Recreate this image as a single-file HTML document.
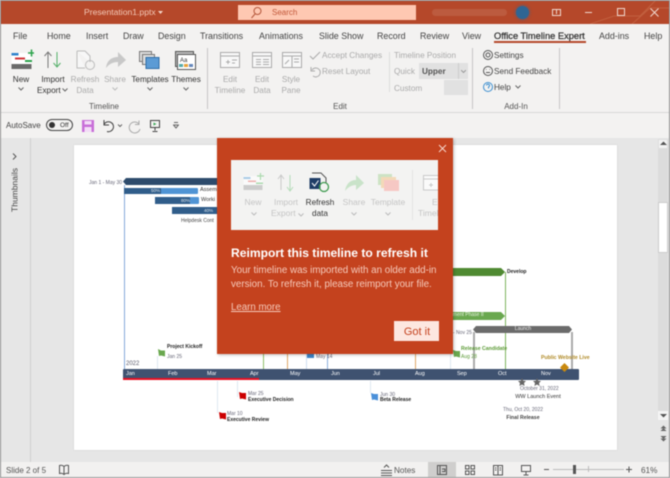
<!DOCTYPE html>
<html><head><meta charset="utf-8"><style>
html,body{margin:0;padding:0}
body{width:670px;height:478px;overflow:hidden;background:#e6e6e6;font-family:"Liberation Sans",sans-serif;position:relative}
#w{position:absolute;left:0;top:0;width:670px;height:478px;overflow:hidden;filter:blur(.4px)}
#w div,#w span.t,#w svg{position:absolute}
.t{position:absolute;white-space:nowrap;font-size:8.2px;line-height:11px;color:#444;margin-top:1px}
.c{transform:translateX(-50%);text-align:center}
.tab{top:29px;font-size:8.9px;line-height:12px;color:#444}
.g{color:#aaa}
.k{color:#333}
.m{font-size:5px;line-height:7px;color:#222}
.d{font-size:5px;line-height:6px;color:#667}
.b{font-weight:bold}
.mo{font-size:5.5px;line-height:7px;color:#fff;top:370px}
.q{color:#c4c4c4;font-size:8.500px}
</style></head><body><div id="w">
<!-- chrome -->
<div style="left:0;top:0;width:670px;height:24px;background:#b5482a"></div>
<div style="left:0;top:24px;width:670px;height:89px;background:#f3f2f1"></div>
<div style="left:0;top:112px;width:670px;height:1px;background:#d8d8d8"></div>
<div style="left:0;top:113px;width:670px;height:25px;background:#f3f2f1"></div>
<span class="t" style="left:84px;top:6px;font-size:8.600px;color:#f3c9b8">Presentation1.pptx</span>
<svg style="left:158px;top:11px" width="6" height="4"><path d="M0 0h5L2.500 3z" fill="#f3d5c8"/></svg>
<div style="left:238px;top:5px;width:178px;height:15px;background:#fec8b2"></div>
<svg style="left:250px;top:6px" width="13" height="13" fill="none" stroke="#b5563a"><circle cx="7.500" cy="5" r="3.500"/><path d="M5 8L1.500 12"/></svg>
<span class="t" style="left:272px;top:6px;font-size:8px;color:#c2583a">Search</span>
<div style="left:432px;top:9px;width:75px;height:7px;background:#c9775e;opacity:.4;border-radius:4px"></div>
<div style="left:516px;top:6px;width:13px;height:13px;border-radius:50%;background:#2f6593;box-shadow:0 0 3px #33658f"></div>
<svg style="left:590px;top:0" width="80" height="24" fill="none" stroke="#c2603f"><path d="M0 24L24 16H50L66 0M42 24L60 8H80"/></svg>
<svg style="left:550px;top:7px" width="120" height="12" fill="none" stroke="#f0d8cf"><rect x="2.500" y="2.500" width="8" height="6"/><path d="M6.500 3v4"/><path d="M35 5.500h7"/><rect x="67.500" y="1.500" width="7" height="7"/><path d="M100.500 1.500l8 8M108.500 1.500l-8 8"/></svg>
<span class="t tab" style="left:13px">File</span>
<span class="t tab" style="left:47px">Home</span>
<span class="t tab" style="left:86px">Insert</span>
<span class="t tab" style="left:123px">Draw</span>
<span class="t tab" style="left:158px">Design</span>
<span class="t tab" style="left:200px">Transitions</span>
<span class="t tab" style="left:259px">Animations</span>
<span class="t tab" style="left:319px">Slide Show</span>
<span class="t tab" style="left:377px">Record</span>
<span class="t tab" style="left:420px">Review</span>
<span class="t tab" style="left:462px">View</span>
<span class="t tab" style="left:494px;font-size:9.300px;color:#333;-webkit-text-stroke:.25px #333">Office Timeline Expert</span>
<div style="left:494px;top:41px;width:92px;height:2px;background:#b5482a"></div>
<span class="t tab" style="left:599px">Add-ins</span>
<span class="t tab" style="left:644px">Help</span>
<!-- ribbon: new -->
<svg style="left:10px;top:49px" width="24" height="21"><rect x="1.500" y="4" width="20" height="16" fill="#fff"/><rect x="1.500" y="15" width="20" height="5" fill="#6b6b6b"/><rect x="1.500" y="4" width="7" height="2.500" fill="#2f83cc"/><rect x="5" y="8.500" width="10" height="2" fill="#d13438"/><rect x="15" y="11" width="7" height="2" fill="#2aa24a"/><path d="M25 4h-7M21.500 .5v7" stroke="#2aa24a" stroke-width="1.500"/></svg>
<span class="t c k" style="left:21px;top:73px">New</span>
<svg style="left:18px;top:87px" width="6" height="4" fill="none" stroke="#666"><path d="M.5 .5L3 3L5.500 .5"/></svg>
<svg style="left:43px;top:50px" width="20" height="19" fill="none"><path d="M5 18V2M1.500 6L5 2l3.500 4" stroke="#777"/><path d="M14 2v15M10.500 13l3.500 4 3.500-4" stroke="#55b06a"/></svg>
<span class="t c k" style="left:53px;top:73px">Import</span>
<span class="t k" style="left:37px;top:84px">Export</span>
<svg style="left:62px;top:88px" width="6" height="4" fill="none" stroke="#666"><path d="M.5 .5L3 3L5.500 .5"/></svg>
<svg style="left:75px;top:50px" width="23" height="21" fill="none" stroke="#bbb"><path d="M2 1h8l5 5v6M2 1v17h8" fill="#f7f7f7"/><circle cx="15" cy="15" r="4.500"/></svg>
<span class="t c g" style="left:85px;top:73px">Refresh</span>
<span class="t c g" style="left:85px;top:84px">Data</span>
<svg style="left:105px;top:51px" width="22" height="18"><path d="M1 17C2 9 7 6 13 6V1l8 8-8 7v-5C8 11 4 13 1 17z" fill="#c8c8c8"/></svg>
<span class="t c g" style="left:115px;top:73px">Share</span>
<svg style="left:112px;top:87px" width="6" height="4" fill="none" stroke="#bbb"><path d="M.5 .5L3 3L5.500 .5"/></svg>
<svg style="left:139px;top:51px" width="22" height="18"><rect x=".5" y=".5" width="12" height="10" fill="#ddd" stroke="#777"/><rect x="3.500" y="3.500" width="12" height="10" fill="#ddd" stroke="#777"/><rect x="7" y="6.500" width="13" height="11" fill="#5b9bd5" stroke="#2f6ea8"/></svg>
<span class="t c k" style="left:150px;top:73px">Templates</span>
<svg style="left:147px;top:87px" width="6" height="4" fill="none" stroke="#666"><path d="M.5 .5L3 3L5.500 .5"/></svg>
<svg style="left:175px;top:51px" width="22" height="19"><rect x=".5" y=".5" width="18" height="15" fill="#bbb" stroke="#555"/><rect x="2.500" y="3.500" width="18" height="15" fill="#fff" stroke="#555"/><text x="5" y="11" font-size="6" font-family="Liberation Sans" fill="#333">Aa</text><rect x="4" y="13" width="4" height="3" fill="#5aa"/><rect x="9" y="13" width="4" height="3" fill="#e8a33a"/><rect x="14" y="13" width="4" height="3" fill="#68b"/></svg>
<span class="t c k" style="left:186px;top:73px">Themes</span>
<svg style="left:183px;top:87px" width="6" height="4" fill="none" stroke="#666"><path d="M.5 .5L3 3L5.500 .5"/></svg>
<span class="t c" style="left:104px;top:100px;font-size:8px;color:#555">Timeline</span>
<div style="left:207px;top:48px;width:1px;height:61px;background:#c6c6c6"></div>
<!-- edit -->
<svg style="left:220px;top:52px" width="86" height="17" fill="#f8f8f8" stroke="#aaa"><rect x=".5" y=".5" width="19" height="15"/><path d="M1 4h18M6 10h4M8 8v4M12 8h5M12 11h3"/><rect x="32.500" y=".5" width="19" height="15"/><path d="M33 4h18M36 7.500h5M43 7.500h6M36 10h5M43 10h6M36 12.500h5M43 12.500h6"/><rect x="62.500" y=".5" width="19" height="15"/><path d="M63 4h18M72 4v11M65 12l4-4M74 7h5M74 10h5"/></svg>
<span class="t c g" style="left:230px;top:73px">Edit</span><span class="t c g" style="left:230px;top:84px">Timeline</span>
<span class="t c g" style="left:262px;top:73px">Edit</span><span class="t c g" style="left:262px;top:84px">Data</span>
<span class="t c g" style="left:291px;top:73px">Style</span><span class="t c g" style="left:291px;top:84px">Pane</span>
<svg style="left:309px;top:50px" width="13" height="30" fill="none" stroke="#aaa"><path d="M1 6l3 3 7-7"/><path d="M3 20a4.500 4.500 0 1 1 1 6M2 17v4h4"/></svg>
<span class="t g" style="left:322px;top:49px">Accept Changes</span>
<span class="t g" style="left:322px;top:65px">Reset Layout</span>
<div style="left:389px;top:52px;width:1px;height:40px;background:#ddd"></div>
<span class="t g" style="left:394px;top:49px">Timeline Position</span>
<span class="t g" style="left:394px;top:65px">Quick</span>
<span class="t g" style="left:394px;top:82px">Custom</span>
<div style="left:419px;top:63px;width:49px;height:16px;background:#e1e1e1"></div>
<div style="left:458px;top:63px;width:1px;height:16px;background:#ccc"></div>
<span class="t b" style="left:422px;top:65px;color:#555">Upper</span>
<svg style="left:461px;top:70px" width="5" height="3" fill="none" stroke="#999"><path d="M0 0L2.500 2.500L5 0"/></svg>
<div style="left:444px;top:80px;width:24px;height:15px;background:#e1e1e1"></div>
<span class="t c" style="left:340px;top:100px;font-size:8px;color:#555">Edit</span>
<div style="left:472px;top:48px;width:1px;height:61px;background:#c6c6c6"></div>
<!-- add-in -->
<svg style="left:481px;top:49px" width="15" height="47" fill="none" stroke="#555"><circle cx="7" cy="6" r="4.500"/><circle cx="7" cy="6" r="2"/><circle cx="7" cy="22" r="4.500"/><path d="M5 23.500h4M5 20.500h.5M8.500 20.500h.5"/><circle cx="7" cy="38" r="4.500" stroke="#3b8ed0"/><path d="M5.500 36.500a1.500 1.500 0 1 1 2 1.500v1.500" stroke="#3b8ed0"/></svg>
<span class="t" style="left:494px;top:49px">Settings</span>
<span class="t" style="left:494px;top:65px">Send Feedback</span>
<span class="t" style="left:494px;top:81px">Help</span>
<svg style="left:515px;top:85px" width="6" height="4" fill="none" stroke="#666"><path d="M.5 .5L3 3L5.500 .5"/></svg>
<span class="t c" style="left:516px;top:100px;font-size:8px;color:#555">Add-In</span>
<div style="left:559px;top:48px;width:1px;height:61px;background:#c6c6c6"></div>
<!-- QAT -->
<span class="t" style="left:6px;top:119px;font-size:8px">AutoSave</span>
<div style="left:46px;top:119px;width:25px;height:10px;border:1px solid #444;border-radius:6px"></div>
<div style="left:49px;top:122px;width:6px;height:6px;border-radius:50%;background:#333"></div>
<span class="t" style="left:60px;top:119px;font-size:6.500px;color:#333">Off</span>
<svg style="left:82px;top:120px" width="12" height="12"><rect x="0" y="0" width="12" height="12" fill="#c86fd8"/><rect x="2.500" y="1" width="7" height="3.500" fill="#f3dcf7"/><rect x="2.500" y="7" width="7" height="5" fill="#f3dcf7"/></svg>
<svg style="left:101px;top:118px" width="22" height="15" fill="none" stroke="#444"><path d="M3 2v5h5M3 6.500a5 5 0 1 1 3 7"/><path d="M17 6.500l2 2 2-2" stroke="#666"/></svg>
<svg style="left:128px;top:119px" width="15" height="15" fill="none" stroke="#aaa"><path d="M11 1.500v4H7M11 5a5.500 5.500 0 1 0 1 5"/></svg>
<svg style="left:149px;top:120px" width="13" height="13" fill="none" stroke="#444"><rect x="1.500" y=".5" width="9" height="7"/><path d="M6 7.500v3M3.500 11.500h5"/><path d="M4.500 2.500l3 1.500-3 1.500z" fill="#3aa655" stroke="none"/></svg>
<svg style="left:173px;top:122px" width="6" height="7" fill="none" stroke="#666"><path d="M1 .5h4M.5 3L3 6l2.500-3z"/></svg>
<!-- main -->
<div style="left:30px;top:138px;width:1px;height:324px;background:#cfcfcf"></div>
<svg style="left:12px;top:153px" width="5" height="7" fill="none" stroke="#555"><path d="M1 .5L4 3.500L1 6.500"/></svg>
<span class="t" style="left:14.500px;top:189px;font-size:8.500px;transform:translate(-50%,-50%) rotate(-90deg);color:#444">Thumbnails</span>
<div style="left:74px;top:145px;width:543px;height:305px;background:#fff;box-shadow:0 0 1px #bbb"></div>
<!-- scrollbar -->
<div style="left:658px;top:139px;width:10px;height:281px;background:#dcdcdc"></div>
<div style="left:658px;top:139px;width:10px;height:10px;background:#f4f4f4;border:1px solid #ddd;box-sizing:border-box"></div>
<div style="left:658px;top:202px;width:10px;height:51px;background:#fff;border:1px solid #ccc;box-sizing:border-box"></div>
<div style="left:658px;top:411px;width:10px;height:9px;background:#f4f4f4"></div>
<svg style="left:660px;top:141px" width="7" height="5"><path d="M0 4L3.500 .5 7 4z" fill="#555"/></svg>
<svg style="left:660px;top:413px" width="7" height="5"><path d="M0 1L3.500 4.500 7 1z" fill="#555"/></svg>
<svg style="left:660px;top:424px" width="7" height="8" fill="#666"><path d="M1 .5h5M3.500 1.500L.5 4.500h6zM3.500 4L.5 7h6z"/></svg>
<svg style="left:660px;top:435px" width="7" height="8" fill="#666"><path d="M1 7.500h5M3.500 6.500L.5 3.500h6zM3.500 4L.5 1h6z"/></svg>
<!-- timeline -->
<span class="t d" style="left:89px;top:179px">Jan 1 - May 30</span>
<div style="left:124px;top:185px;width:1px;height:184px;background:#85a9da"></div>
<svg style="left:123px;top:177px" width="100" height="10"><path d="M0 4.500L3 1H100V8H3z" fill="#2d4b6c"/></svg>
<div style="left:124px;top:188px;width:74px;height:6px;background:#5094d4;border-radius:1px"></div>
<div style="left:124px;top:188px;width:37px;height:6px;background:#305d8a"></div>
<span class="t" style="left:151px;top:187px;font-size:4.500px;line-height:6px;color:#dfe8f0">50%</span>
<span class="t k" style="left:200px;top:186px;font-size:5.500px;line-height:7px">Assem</span>
<div style="left:155px;top:197px;width:44px;height:7px;background:#5094d4;border-radius:1px"></div>
<div style="left:155px;top:197px;width:35px;height:7px;background:#305d8a"></div>
<span class="t" style="left:181px;top:197px;font-size:4.500px;line-height:6px;color:#dfe8f0">80%</span>
<span class="t k" style="left:201px;top:196px;font-size:5.500px;line-height:7px">Worki</span>
<div style="left:172px;top:207px;width:45px;height:7px;background:#305d8a"></div>
<span class="t" style="left:204px;top:207px;font-size:4.500px;line-height:6px;color:#dfe8f0">40%</span>
<span class="t" style="left:181px;top:217px;font-size:5px;line-height:7px;color:#444">Helpdesk Cont</span>
<!-- axis -->
<div style="left:123px;top:369px;width:456px;height:11px;background:#3f5270;border-radius:1px"></div>
<div style="left:123px;top:378px;width:136px;height:2px;background:#e81123"></div>
<span class="t" style="left:126px;top:360px;font-size:6px;line-height:7px;color:#556">2022</span>
<span class="t mo" style="left:126px">Jan</span><span class="t mo" style="left:168px">Feb</span><span class="t mo" style="left:207px">Mar</span><span class="t mo" style="left:250px">Apr</span><span class="t mo" style="left:290px">May</span><span class="t mo" style="left:331px">Jun</span><span class="t mo" style="left:373px">Jul</span><span class="t mo" style="left:415px">Aug</span><span class="t mo" style="left:457px">Sep</span><span class="t mo" style="left:498px">Oct</span><span class="t mo" style="left:541px">Nov</span>
<!-- milestones above -->
<div style="left:157px;top:356px;width:1px;height:13px;background:#dfe8f2"></div>
<svg style="left:158px;top:349px" width="8" height="8"><path d="M0 0l3 1.500 4 0v6l-4-1-2 .5z" fill="#6aa84f"/></svg>
<span class="t m b" style="left:167px;top:343px">Project Kickoff</span>
<span class="t d" style="left:167px;top:353px">Jan 25</span>
<div style="left:263px;top:354px;width:1px;height:15px;background:#8fbf6a"></div>
<div style="left:287px;top:354px;width:1px;height:15px;background:#e0a868"></div>
<div style="left:306px;top:354px;width:1px;height:15px;background:#cfdff2"></div>
<div style="left:327px;top:354px;width:1px;height:15px;background:#8cb0dc"></div>
<svg style="left:307px;top:354px" width="8" height="4"><path d="M0 0h7v4H0z" fill="#3d84c6"/></svg>
<span class="t d" style="left:316px;top:353px">May 14</span>
<div style="left:415px;top:354px;width:1px;height:15px;background:#e0a868"></div>
<div style="left:450px;top:354px;width:1px;height:15px;background:#dfe8f2"></div>
<!-- below -->
<div style="left:217px;top:381px;width:1px;height:32px;background:#dfe8f2"></div>
<div style="left:237px;top:381px;width:1px;height:16px;background:#dfe8f2"></div>
<svg style="left:239px;top:392px" width="8" height="8"><path d="M0 0l3 1 4 0v6.500l-4-1-2 .5z" fill="#c00"/></svg>
<span class="t d" style="left:248px;top:390px">Mar 25</span>
<span class="t m b" style="left:248px;top:396px">Executive Decision</span>
<svg style="left:219px;top:412px" width="8" height="8"><path d="M0 0l3 1 4 0v6.500l-4-1-2 .5z" fill="#c00"/></svg>
<span class="t d" style="left:227px;top:410px">Mar 10</span>
<span class="t m b" style="left:227px;top:416px">Executive Review</span>
<div style="left:370px;top:381px;width:1px;height:12px;background:#dfe8f2"></div>
<svg style="left:371px;top:393px" width="8" height="8"><path d="M0 0l3 1 4 0v6.500l-4-1-2 .5z" fill="#4a90d9"/></svg>
<span class="t d" style="left:380px;top:391px">Jun 30</span>
<span class="t m b" style="left:380px;top:396px">Beta Release</span>
<!-- right bars -->
<svg style="left:450px;top:268px" width="56" height="8"><path d="M0 0H51L55 4L51 8H0z" fill="#4f8a32"/></svg>
<span class="t b" style="left:507px;top:268px;font-size:5px;line-height:7px;color:#222">Develop</span>
<svg style="left:450px;top:312px" width="56" height="8"><path d="M0 0H51L55 4L51 8H0z" fill="#6aa84f"/></svg>
<span class="t" style="left:450px;top:311px;font-size:5px;line-height:7px;color:#eaf3e4">pment Phase II</span>
<div style="left:505px;top:272px;width:1px;height:97px;background:#7fb35e"></div>
<span class="t d" style="left:453px;top:329px">- Nov 25</span>
<svg style="left:473px;top:325px" width="100" height="9"><path d="M0 4.500L3 1H96L99 4.500L96 8H3z" fill="#6b6b6b"/></svg>
<span class="t c" style="left:523px;top:325px;font-size:5px;line-height:7px;color:#eee">Launch</span>
<div style="left:473px;top:332px;width:2px;height:37px;background:#aaa"></div>
<div style="left:571px;top:332px;width:2px;height:37px;background:#aaa"></div>
<svg style="left:453px;top:350px" width="8" height="8"><path d="M0 0l3 1 4 0v6.500l-4-1-2 .5z" fill="#6aa84f"/></svg>
<span class="t b" style="left:461px;top:345px;font-size:5.200px;line-height:7px;color:#5b9a35">Release Candidate</span>
<span class="t" style="left:461px;top:353px;font-size:5px;line-height:7px;color:#5b9a35">Aug 28</span>
<span class="t b" style="left:541px;top:354px;font-size:5.200px;line-height:7px;color:#b08a26">Public Website Live</span>
<svg style="left:560px;top:363px" width="9" height="9"><path d="M4.500 0L9 4.500L4.500 9L0 4.500z" fill="#c9890f"/></svg>
<svg style="left:518px;top:378px" width="26" height="8" fill="#666"><path d="M4 0l1.200 2.800L8 3 6 5l.6 3L4 6.500 1.400 8 2 5 0 3l2.800-.2z"/><path d="M19 0l1.200 2.800L23 3l-2 2 .6 3L19 6.500 16.400 8l.6-3-2-2 2.800-.2z"/></svg>
<span class="t d" style="left:520px;top:385px">October 31, 2022</span>
<span class="t c" style="left:538px;top:393px;font-size:5.500px;line-height:7px;color:#333">WW Launch Event</span>
<span class="t d" style="left:503px;top:406px">Thu, Oct 20, 2022</span>
<span class="t c b" style="left:523px;top:414px;font-size:5.200px;line-height:7px;color:#444">Final Release</span>
<!-- dialog -->
<div style="left:217px;top:138px;width:236px;height:216px;background:#c4421e;box-shadow:1px 1px 3px rgba(0,0,0,.25)"></div>
<svg style="left:438px;top:144px" width="9" height="9" stroke="#f6d5ca" fill="none"><path d="M1 1l7 7M8 1l-7 7"/></svg>
<div style="left:231px;top:160px;width:207px;height:70px;background:#f3f3f2"></div>
<svg style="left:243px;top:173px" width="22" height="18"><rect x=".5" y="3" width="19" height="14" fill="#fafafa"/><rect x=".5" y="12" width="19" height="5" fill="#ccc"/><rect x=".5" y="4" width="7" height="2" fill="#a9cbe6"/><rect x="5" y="7.500" width="8" height="1.500" fill="#eeb0ae"/><rect x="13" y="9.500" width="7" height="1.500" fill="#abd9ae"/><path d="M21 3h-7M17.500 0v7" stroke="#abd9ae" stroke-width="1.200"/></svg>
<span class="t c q" style="left:253px;top:196px">New</span>
<svg style="left:251px;top:212px" width="6" height="4" fill="none" stroke="#bbb"><path d="M.5 .5L3 3L5.500 .5"/></svg>
<svg style="left:277px;top:174px" width="20" height="18" fill="none"><path d="M4 16V1M1 5L4 1l3 4" stroke="#c9c9c9"/><path d="M13 1v16M10 13l3 4 3-4" stroke="#b5dcb9"/></svg>
<span class="t c q" style="left:286px;top:196px">Import</span>
<span class="t q" style="left:271px;top:207px">Export</span>
<svg style="left:298px;top:213px" width="6" height="4" fill="none" stroke="#bbb"><path d="M.5 .5L3 3L5.500 .5"/></svg>
<svg style="left:309px;top:172px" width="21" height="21"><path d="M3 1h9l5 5v5" fill="none" stroke="#555"/><rect x=".5" y="6" width="11" height="11" fill="#1f3d66"/><path d="M3 11l2.500 3 4-5.500" fill="none" stroke="#fff"/><circle cx="15" cy="15" r="4.500" fill="none" stroke="#3f9b50" stroke-width="1.300"/></svg>
<span class="t c" style="left:320px;top:196px;color:#333;font-size:8.200px">Refresh</span>
<span class="t c" style="left:320px;top:207px;color:#333;font-size:8.200px">data</span>
<svg style="left:344px;top:175px" width="21" height="17"><path d="M1 16C2 9 6 5 12 5V0l8 8-8 7v-5C8 10 4 12 1 16z" fill="#c9e3c9"/></svg>
<span class="t c q" style="left:354px;top:196px">Share</span>
<svg style="left:351px;top:212px" width="6" height="4" fill="none" stroke="#bbb"><path d="M.5 .5L3 3L5.500 .5"/></svg>
<svg style="left:378px;top:174px" width="22" height="18"><rect x="0" y="0" width="14" height="11" fill="#cde3c4"/><rect x="3" y="3" width="15" height="11" fill="#f3d9b8"/><rect x="6" y="6" width="15" height="11" fill="#f6c8c4"/></svg>
<span class="t c q" style="left:388px;top:196px">Template</span>
<svg style="left:385px;top:212px" width="6" height="4" fill="none" stroke="#bbb"><path d="M.5 .5L3 3L5.500 .5"/></svg>
<div style="left:412px;top:170px;width:1px;height:50px;background:#e3e3e3"></div>
<svg style="left:423px;top:175px" width="15" height="16" fill="#fafafa" stroke="#c9c9c9"><path d="M15 .5H.5V15H15M1 4h14M6 10h4M8 8v4"/></svg>
<span class="t q" style="left:432px;top:196px;width:6px;overflow:hidden">Edit</span>
<span class="t q" style="left:418px;top:207px;width:20px;overflow:hidden">Timeline</span>
<span class="t" style="left:231px;top:245px;font-size:12.100px;line-height:15px;font-weight:bold;color:#fff">Reimport this timeline to refresh it</span>
<span class="t" style="left:231px;top:263px;font-size:9.800px;line-height:14px;color:#f6cbbc">Your timeline was imported with an older add-in<br>version. To refresh it, please reimport your file.</span>
<span class="t" style="left:231px;top:300px;font-size:9.700px;line-height:13px;color:#f6cbbc;text-decoration:underline">Learn more</span>
<div style="left:394px;top:321px;width:45px;height:20px;background:#fde7e0"></div>
<span class="t c" style="left:417px;top:325px;font-size:11px;line-height:12px;color:#c4421e">Got it</span>
<!-- status -->
<div style="left:0;top:462px;width:670px;height:16px;background:#f2f1f0"></div>
<div style="left:0;top:477px;width:670px;height:1px;background:#9b9b9b"></div>
<span class="t" style="left:6px;top:464px;font-size:8px;color:#555">Slide 2 of 5</span>
<svg style="left:58px;top:464px" width="12" height="12" fill="none" stroke="#555"><path d="M1.500 1.500c2-.5 3.500 0 4.500 1 1-1 2.500-1.500 4.500-1v8c-2-.5-3.500 0-4.500 1-1-1-2.500-1.500-4.500-1zM6 2.500v8"/></svg>
<svg style="left:380px;top:464px" width="13" height="13" fill="none" stroke="#555"><path d="M1 6.500h11M1 9h11M1 11.500h11M4 3.500L6.500 1 9 3.500"/></svg>
<span class="t" style="left:394px;top:464px;font-size:8.200px;color:#555">Notes</span>
<div style="left:428px;top:462px;width:28px;height:15px;background:#cfcecd"></div>
<svg style="left:436px;top:464px" width="12" height="12" fill="none" stroke="#555"><rect x="1.500" y="1.500" width="9" height="9"/><path d="M4 1.500v9M6 5h3v2.500H6"/></svg>
<svg style="left:464px;top:464px" width="12" height="12" fill="none" stroke="#555"><rect x="1.500" y="1.500" width="3.500" height="3.500"/><rect x="7" y="1.500" width="3.500" height="3.500"/><rect x="1.500" y="7" width="3.500" height="3.500"/><rect x="7" y="7" width="3.500" height="3.500"/></svg>
<svg style="left:492px;top:464px" width="12" height="12" fill="none" stroke="#555"><rect x="1.500" y="1.500" width="9" height="9.500"/><path d="M6 1.500v9.500M3 4h1.500M3 6h1.500M7.500 4H9M7.500 6H9"/></svg>
<svg style="left:520px;top:464px" width="12" height="12" fill="none" stroke="#555"><rect x="1.500" y="1.500" width="9" height="6"/><path d="M6 7.500v3M3.500 11h5"/></svg>
<div style="left:544px;top:469px;width:5px;height:1px;background:#555"></div>
<div style="left:553px;top:469px;width:71px;height:1px;background:#bbb"></div>
<div style="left:588px;top:466px;width:1px;height:6px;background:#bbb"></div>
<div style="left:573px;top:465px;width:3px;height:9px;background:#555"></div>
<svg style="left:626px;top:466px" width="7" height="7" stroke="#555"><path d="M0 3.500h6M3 .5v6"/></svg>
<span class="t" style="left:641px;top:464px;font-size:8.200px;color:#555">61%</span>
<!-- window edges -->
<div style="left:0;top:0;width:1px;height:478px;background:#8e8e8e"></div>
<div style="left:669px;top:0;width:1px;height:478px;background:#8e8e8e"></div>
<div style="left:0;top:0;width:670px;height:1px;background:#8e8e8e"></div>
</div></body></html>
